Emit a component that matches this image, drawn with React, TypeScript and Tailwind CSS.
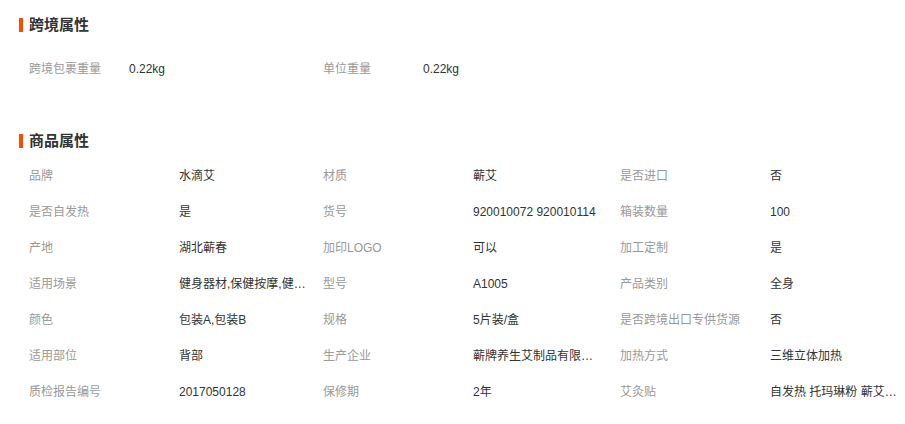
const crossBorder = [
  { label: "跨境包裹重量", value: "0.22kg" },
  { label: "单位重量", value: "0.22kg" },
];

const attrs = [
  { label: "品牌", value: "水滴艾" },
  { label: "材质", value: "蕲艾" },
  { label: "是否进口", value: "否" },
  { label: "是否自发热", value: "是" },
  { label: "货号", value: "920010072 920010114" },
  { label: "箱装数量", value: "100" },
  { label: "产地", value: "湖北蕲春" },
  { label: "加印LOGO", value: "可以" },
  { label: "加工定制", value: "是" },
  { label: "适用场景", value: "健身器材,保健按摩,健身器材" },
  { label: "型号", value: "A1005" },
  { label: "产品类别", value: "全身" },
  { label: "颜色", value: "包装A,包装B" },
  { label: "规格", value: "5片装/盒" },
  { label: "是否跨境出口专供货源", value: "否" },
  { label: "适用部位", value: "背部" },
  { label: "生产企业", value: "蕲牌养生艾制品有限公司" },
  { label: "加热方式", value: "三维立体加热" },
  { label: "质检报告编号", value: "2017050128" },
  { label: "保修期", value: "2年" },
  { label: "艾灸贴", value: "自发热 托玛琳粉 蕲艾 艾草" },
];

function Heading({ title }: { title: string }) {
  return (
    <div className="flex h-[20px] items-center">
      <span className="mr-[6px] h-[14px] w-[4px] bg-[#ff4a00]" />
      <h2 className="text-[15px] font-bold leading-[20px] text-[#333]">{title}</h2>
    </div>
  );
}

export default function App() {
  return (
    <div
      className="min-h-[424px] w-[905px] bg-white pl-[19px] pt-[15px]"
      style={{ fontFamily: '"Liberation Sans", "Noto Sans CJK SC", sans-serif' }}
    >
      <Heading title="跨境属性" />
      <div className="mt-[16px] grid grid-cols-[294px_1fr] pl-[10px]">
        {crossBorder.map((a) => (
          <div key={a.label} className="flex h-[36px] items-center text-[12px]">
            <span className="w-[100px] shrink-0 text-[#999]">{a.label}</span>
            <span className="text-[#333]">{a.value}</span>
          </div>
        ))}
      </div>

      <div className="mt-[44px]">
        <Heading title="商品属性" />
      </div>
      <div className="mt-[7px] grid grid-cols-[294px_297px_1fr] pl-[10px]">
        {attrs.map((a) => (
          <div key={a.label} className="flex h-[36px] items-center text-[12px]">
            <span className="w-[150px] shrink-0 whitespace-nowrap text-[#999]">{a.label}</span>
            <span className="w-[128px] truncate text-[#333]">{a.value}</span>
          </div>
        ))}
      </div>
    </div>
  );
}
